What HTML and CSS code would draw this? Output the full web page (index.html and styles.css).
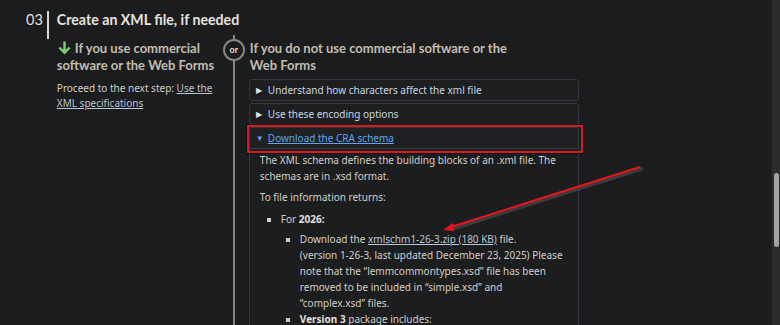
FILE: index.html
```html
<!DOCTYPE html>
<html lang="en">
<head>
<meta charset="utf-8">
<title>Create an XML file</title>
<link rel="stylesheet" href="styles.css">
</head>
<body>
<div class="page">
  <main class="main">
    <section class="step">
      <div class="step-num">03</div>
      <div class="step-body">
        <h2 class="step-title">Create an XML file, if needed</h2>
        <div class="choices">
          <div class="choice choice-left">
            <h3 class="choice-title"><svg class="down-arrow" viewBox="0 0 16 16" width="15" height="15"><path d="M8 1.5 V13.5 M2.5 8 L8 13.5 L13.5 8" fill="none" stroke="#7ccf78" stroke-width="2.6" stroke-linecap="butt" stroke-linejoin="miter"/></svg>If you use commercial software or the Web Forms</h3>
            <p class="text">Proceed to the next step: <a href="#" class="link">Use the XML specifications</a></p>
          </div>
          <div class="divider">
            <span class="or">or</span>
          </div>
          <div class="choice choice-right">
            <h3 class="choice-title title-right">If you do not use commercial software or the Web Forms</h3>
            <details class="acc"><summary>Understand how characters affect the xml file</summary></details>
            <details class="acc"><summary>Use these encoding options</summary></details>
            <details class="acc acc-open" open>
              <summary><a href="#" class="sum-link">Download the CRA schema</a></summary>
              <div class="acc-body">
                <p>The XML schema defines the building blocks of an .xml file. The schemas are in .xsd format.</p>
                <p>To file information returns:</p>
                <ul class="sq">
                  <li>For <strong>2026:</strong>
                    <ul class="sq">
                      <li>Download the <a href="#" class="link">xmlschm1-26-3.zip (180&nbsp;KB)</a> file.<br>(version 1-26-3, last updated December 23, 2025) Please note that the “lemmcommontypes.xsd” file has been removed to be included in “simple.xsd” and “complex.xsd” files.</li>
                      <li><strong>Version 3</strong> package includes:</li>
                    </ul>
                  </li>
                </ul>
              </div>
            </details>
          </div>
        </div>
      </div>
    </section>
    <svg class="annot" width="780" height="325" viewBox="0 0 780 325">
      <line x1="641" y1="169" x2="452" y2="229" stroke="#3a3c40" stroke-width="3.5" stroke-linecap="round"/>
      <line x1="640" y1="167" x2="451" y2="227" stroke="#e8141c" stroke-width="2"/>
      <path d="M443 230 L453 223 L454 231 Z" fill="#e8141c"/>
    </svg>
  </main>
  <aside class="scrollbar"><div class="thumb"></div></aside>
</div>
</body>
</html>
```
FILE: styles.css
```css
html, body {
  margin: 0;
  padding: 0;
  background: #1b1c1e;
  height: 100%;
  overflow: hidden;
}
body {
  font-family: "Noto Sans", "Open Sans", sans-serif;
  color: #d4d0ca;
}
.page {
  display: flex;
  height: 325px;
}
.main {
  flex: 1;
  position: relative;
  overflow: hidden;
}
.scrollbar {
  width: 9px;
  background: #2b2b2c;
  border-left: 1px solid #202021;
  display: flex;
  flex-direction: column;
  padding-top: 173px;
  box-sizing: border-box;
  align-items: center;
}
.thumb {
  width: 5px;
  height: 74px;
  background: #a3a3a3;
  border-radius: 3px;
}
.step {
  display: flex;
  padding: 10px 0 0 26px;
}
.step-num {
  font-family: "Lato", sans-serif;
  font-size: 14.5px;
  line-height: 18px;
  color: #e4e1dc;
  padding-right: 4px;
  margin-top: 1px;
  height: 28px;
  border-right: 2px solid #dcd9d4;
}
.step-body {
  padding-left: 8px;
}
.step-title {
  margin: 0;
  font-family: "Lato", sans-serif;
  font-weight: 700;
  font-size: 14.2px;
  line-height: 19px;
  color: #e6e3de;
}
.choices {
  display: flex;
  margin-top: 11px;
}
.choice-left {
  width: 162px;
}
.choice-title {
  margin: 0;
  font-family: "Lato", sans-serif;
  font-weight: 700;
  font-size: 13px;
  line-height: 17px;
  color: #c3bcb1;
}
.title-right {
  max-width: 285px;
}
.down-arrow {
  vertical-align: -2px;
  margin-right: 3px;
}
.text {
  margin: 7px 0 0;
  font-size: 10px;
  line-height: 15px;
  color: #d3cfc8;
}
.link {
  color: #b9c6d4;
  text-decoration: underline;
}
.divider {
  width: 30px;
  display: flex;
  flex-direction: column;
  align-items: center;
  background: linear-gradient(#8a857f, #8a857f) no-repeat center / 2px 100%;
  margin-top: -5px;
  height: 320px;
}
.or {
  margin-top: 4px;
  width: 18px;
  height: 18px;
  border: 2px solid #8a857f;
  border-radius: 50%;
  background: #1b1c1e;
  color: #e0ddd8;
  font-family: "Lato", sans-serif;
  font-weight: 700;
  font-size: 9px;
  line-height: 17px;
  text-align: center;
}
.choice-right {
  width: 330px;
}
.choice-right .choice-title {
  margin-left: 1px;
}
.acc {
  border: 1px solid #35373a;
  border-radius: 3px;
  margin-top: 2px;
  background: #1d1e20;
}
.choice-right .choice-title + .acc {
  margin-top: 5px;
}
.acc summary {
  list-style: none;
  padding: 2px 8px 2px 6px;
  font-size: 10px;
  line-height: 16px;
  color: #c8d6e5;
  cursor: pointer;
}
.acc summary::-webkit-details-marker { display: none; }
.acc summary::before {
  content: "\25B6";
  font-size: 8px;
  color: #d8e2ec;
  display: inline-block;
  width: 12px;
  vertical-align: 1px;
}
.acc-open {
  position: relative;
  border-bottom: none;
  border-radius: 3px 3px 0 0;
  background: #1c1d1f;
}
.acc-open summary {
  border-bottom: 1px solid #3a3c40;
  background: #1e2023;
}
.acc-open summary::before {
  content: "\25BC";
  color: #5aa7f0;
}
.acc-open::after {
  content: "";
  position: absolute;
  left: -3px;
  top: -3px;
  right: -5px;
  height: 24px;
  border: 2px solid #d01c22;
  box-shadow: 0 0 0 1px rgba(0,0,0,0.5);
  pointer-events: none;
}
.sum-link {
  color: #5aa7f0;
  text-decoration: underline;
}
.acc-body {
  padding: 3px 10px 0 10px;
  font-size: 10px;
  line-height: 16px;
  color: #d3cfc8;
}
.acc-body p {
  margin: 0 0 5px;
}
.acc-body strong {
  color: #e4e0da;
}
.sq {
  list-style: square;
  margin: 6px 0 0;
  padding-left: 21px;
}
.sq .sq {
  padding-left: 19px;
  margin-top: 4px;
}
.annot {
  position: absolute;
  left: 0;
  top: 0;
  pointer-events: none;
}
```
